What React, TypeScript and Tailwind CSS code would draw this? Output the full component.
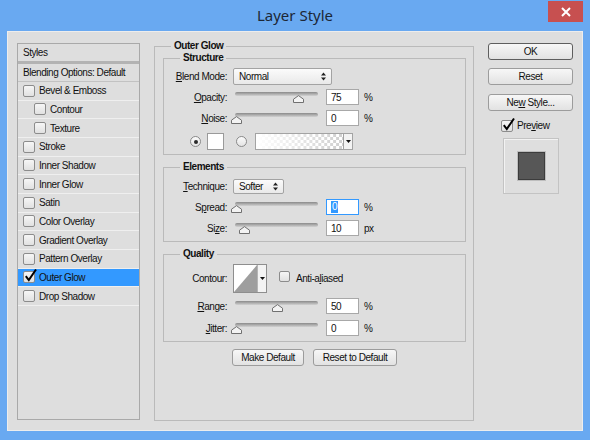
import React from "react";

const UI = "font-['Liberation_Sans',Arial,sans-serif] text-[10px] tracking-[-0.45px] text-[#111]";

const STYLES: { label: string; indent?: boolean; checked?: boolean; selected?: boolean }[] = [
  { label: "Bevel & Emboss" },
  { label: "Contour", indent: true },
  { label: "Texture", indent: true },
  { label: "Stroke" },
  { label: "Inner Shadow" },
  { label: "Inner Glow" },
  { label: "Satin" },
  { label: "Color Overlay" },
  { label: "Gradient Overlay" },
  { label: "Pattern Overlay" },
  { label: "Outer Glow", checked: true, selected: true },
  { label: "Drop Shadow" },
];

function Check({ checked = false, size = "w-[12px] h-[12px]" }: { checked?: boolean; size?: string }) {
  return (
    <span
      className={`relative inline-block shrink-0 rounded-[2px] border border-[#8c8c8c] bg-linear-to-b from-[#f6f6f6] to-[#e1e1e1] ${size}`}
    >
      {checked && (
        <svg className="absolute -top-[4px] left-[0px]" width="14" height="15" viewBox="0 0 14 15">
          <path d="M1.8 8.2 L4.8 12 L12 1.5" fill="none" stroke="#000" strokeWidth="2" />
        </svg>
      )}
    </span>
  );
}

function Radio({ on = false }: { on?: boolean }) {
  return (
    <span className="flex h-[11px] w-[11px] shrink-0 items-center justify-center rounded-full border border-[#8a8a8a] bg-linear-to-b from-[#fbfbfb] to-[#e4e4e4]">
      {on && <span className="h-[4px] w-[4px] rounded-full bg-[#2a2a2a]" />}
    </span>
  );
}

function UpDown() {
  return (
    <svg width="5" height="9" viewBox="0 0 5 9">
      <path d="M0 3.6 L2.5 0.4 L5 3.6Z M0 5.4 L2.5 8.6 L5 5.4Z" fill="#222" />
    </svg>
  );
}

function Caret() {
  return (
    <svg width="5" height="3" viewBox="0 0 5 3">
      <path d="M0 0 H5 L2.5 3Z" fill="#111" />
    </svg>
  );
}

function Label({ children }: { children: React.ReactNode }) {
  return <span className="w-[63px] shrink-0 text-right">{children}</span>;
}

function Slider({ pct }: { pct: number }) {
  return (
    <div className="relative ml-[8px] h-[16px] w-[83px] shrink-0">
      <div className="absolute left-0 right-0 top-[3px] h-[4px] rounded-full bg-linear-to-b from-[#8a8a8a] to-[#d2d2d2]" />
      <svg className="absolute top-[6px]" style={{ left: pct * 0.82 - 4 }} width="11" height="8" viewBox="0 0 11 8">
        <path d="M0.5 7.5V4.2L5.5 0.6L10.5 4.2V7.5Z" fill="#f3f3f3" stroke="#707070" />
      </svg>
    </div>
  );
}

function NumBox({ value, focused = false }: { value: string; focused?: boolean }) {
  return (
    <div
      className={`ml-[8px] flex h-[16px] w-[33px] shrink-0 items-center border bg-white pl-[4px] ${
        focused ? "border-[#3399ff]" : "border-[#a8a8a8]"
      }`}
    >
      {focused ? <span className="bg-[#3399ff] px-[1px] leading-[12px] text-white">{value}</span> : <span>{value}</span>}
    </div>
  );
}

function SliderRow({
  label,
  pct,
  value,
  unit,
  focused,
  gap,
}: {
  label: React.ReactNode;
  pct: number;
  value: string;
  unit: string;
  focused?: boolean;
  gap: string;
}) {
  return (
    <div className={`flex h-[16px] items-center ${gap}`}>
      <Label>{label}</Label>
      <Slider pct={pct} />
      <NumBox value={value} focused={focused} />
      <span className="ml-[5px]">{unit}</span>
    </div>
  );
}

function Group({ title, className, children }: { title: string; className: string; children: React.ReactNode }) {
  return (
    <fieldset className={`border border-[#bababa] p-0 ${className}`}>
      <legend className="ml-[16px] px-[3px] font-bold leading-[12px]">{title}</legend>
      {children}
    </fieldset>
  );
}

function Btn({ children, w, strong = false }: { children: React.ReactNode; w: string; strong?: boolean }) {
  return (
    <div
      className={`flex h-[17px] items-center justify-center rounded-[3px] border bg-linear-to-b from-[#f7f7f7] to-[#e2e2e2] ${w} ${
        strong ? "border-[#5e5e5e]" : "border-[#9c9c9c]"
      }`}
    >
      <span>{children}</span>
    </div>
  );
}

export default function App() {
  return (
    <div className={`flex h-[440px] w-[590px] flex-col bg-[#69a9f1] ${UI}`}>
      {/* window chrome */}
      <div className="relative flex h-[31px] shrink-0 items-center justify-center">
        <span className="font-['Noto_Sans',sans-serif] text-[15px] tracking-normal text-[#1c2736]">Layer Style</span>
        <div className="absolute right-[7px] top-[1px] flex h-[21px] w-[35px] items-center justify-center bg-[#c75050]">
          <svg width="10" height="10" viewBox="0 0 10 10">
            <path d="M1 1L9 9M9 1L1 9" stroke="#fff" strokeWidth="2" />
          </svg>
        </div>
      </div>

      <div className="mx-[7px] flex h-[400px] items-start border border-[#ededed] bg-[#dedede] pl-[9px] pt-[8px]">
        {/* styles list */}
        <div className="mt-[3px] flex h-[377px] w-[123px] shrink-0 flex-col border border-[#a9a9a9]">
          <div className="flex h-[20px] items-center border-b-[3px] border-[#b3b3b3] pl-[5px]">Styles</div>
          <div className="flex h-[18px] items-center whitespace-nowrap border-b border-[#c2c2c2] pl-[5px]">
            Blending Options: Default
          </div>
          {STYLES.map((s) => (
            <div
              key={s.label}
              className={`flex h-[18.67px] items-center border-b border-[#efefef] ${s.indent ? "pl-[16px]" : "pl-[5px]"} ${
                s.selected ? "bg-[#3399ff]" : ""
              }`}
            >
              <Check checked={s.checked} />
              <span className="ml-[4px]">{s.label}</span>
            </div>
          ))}
        </div>

        {/* outer glow settings */}
        <fieldset className="ml-[14px] h-[381px] w-[320px] shrink-0 border border-[#bababa] pb-0 pl-[8px] pr-[7px] pt-0">
          <legend className="ml-[8px] px-[3px] font-bold leading-[12px]">Outer Glow</legend>

          <Group title="Structure" className="h-[103px]">
            <div className="mt-[4px] flex h-[17px] items-center">
              <Label>
                <u>B</u>lend Mode:
              </Label>
              <div className="ml-[6px] flex h-[17px] w-[99px] items-center justify-between rounded-[2px] border border-[#a3a3a3] bg-linear-to-b from-[#fbfbfb] to-[#e9e9e9] pl-[5px] pr-[5px]">
                <span>Normal</span>
                <UpDown />
              </div>
            </div>
            <SliderRow label={<><u>O</u>pacity:</>} pct={75} value="75" unit="%" gap="mt-[4px]" />
            <SliderRow label={<><u>N</u>oise:</>} pct={0} value="0" unit="%" gap="mt-[5px]" />
            <div className="mt-[7px] flex h-[17px] items-center pl-[26px]">
              <Radio on />
              <span className="ml-[6px] h-[17px] w-[17px] border border-[#9a9a9a] bg-white" />
              <span className="ml-[12px]">
                <Radio />
              </span>
              <div className="ml-[8px] flex h-[17px] w-[98px] border border-[#a3a3a3] bg-white">
                <svg className="h-full flex-1" viewBox="0 0 88 15" preserveAspectRatio="none">
                  <defs>
                    <pattern id="chk" width="6" height="6" patternUnits="userSpaceOnUse">
                      <rect width="6" height="6" fill="#fff" />
                      <rect width="3" height="3" fill="#cfcfcf" />
                      <rect x="3" y="3" width="3" height="3" fill="#cfcfcf" />
                    </pattern>
                    <linearGradient id="fade" x1="0" x2="1" y1="0" y2="0">
                      <stop offset="0" stopColor="#fff" stopOpacity="1" />
                      <stop offset="1" stopColor="#fff" stopOpacity="0" />
                    </linearGradient>
                  </defs>
                  <rect width="88" height="15" fill="url(#chk)" />
                  <rect width="88" height="15" fill="url(#fade)" />
                </svg>
                <div className="flex w-[9px] items-center justify-center border-l border-[#a3a3a3] bg-[#f3f3f3]">
                  <Caret />
                </div>
              </div>
            </div>
          </Group>

          <Group title="Elements" className="mt-[6px] h-[81px]">
            <div className="mt-[6px] flex h-[15px] items-center">
              <Label>
                <u>T</u>echnique:
              </Label>
              <div className="ml-[6px] flex h-[15px] w-[51px] items-center justify-between rounded-[2px] border border-[#a3a3a3] bg-linear-to-b from-[#fbfbfb] to-[#e9e9e9] pl-[5px] pr-[5px]">
                <span>Softer</span>
                <UpDown />
              </div>
            </div>
            <SliderRow label={<>S<u>p</u>read:</>} pct={0} value="0" unit="%" focused gap="mt-[5px]" />
            <SliderRow label={<>Si<u>z</u>e:</>} pct={10} value="10" unit="px" gap="mt-[5px]" />
          </Group>

          <Group title="Quality" className="mt-[6px] h-[94px]">
            <div className="mt-[4px] flex h-[29px] items-center">
              <Label>Contour:</Label>
              <div className="ml-[6px] flex h-[29px] w-[34px] border border-[#8e8e8e] bg-white">
                <svg className="h-full flex-1" viewBox="0 0 24 27" preserveAspectRatio="none">
                  <path d="M0 27 L24 0 L24 27Z" fill="#9e9e9e" />
                </svg>
                <div className="flex w-[9px] items-center justify-center border-l border-[#b5b5b5] bg-[#f3f3f3]">
                  <Caret />
                </div>
              </div>
              <span className="ml-[12px]">
                <Check size="w-[11px] h-[11px]" />
              </span>
              <span className="ml-[6px]">
                Anti-a<u>l</u>iased
              </span>
            </div>
            <SliderRow label={<><u>R</u>ange:</>} pct={50} value="50" unit="%" gap="mt-[5px]" />
            <SliderRow label={<><u>J</u>itter:</>} pct={0} value="0" unit="%" gap="mt-[6px]" />
          </Group>

          <div className="mt-[7px] flex justify-center gap-[9px]">
            <Btn w="w-[72px]">Make Default</Btn>
            <Btn w="w-[84px]">Reset to Default</Btn>
          </div>
        </fieldset>

        {/* dialog buttons */}
        <div className="ml-[14px] mt-[3px] flex w-[85px] shrink-0 flex-col">
          <Btn w="w-[85px]" strong>
            OK
          </Btn>
          <div className="mt-[8px]">
            <Btn w="w-[85px]">Reset</Btn>
          </div>
          <div className="mt-[9px]">
            <Btn w="w-[85px]">
              Ne<u>w</u> Style...
            </Btn>
          </div>
          <div className="mt-[8px] flex h-[13px] items-center pl-[13px]">
            <Check checked />
            <span className="ml-[4px]">
              Pre<u>v</u>iew
            </span>
          </div>
          <div className="ml-[15px] mt-[6px] flex h-[56px] w-[56px] items-center justify-center border border-[#c3c3c3] shadow-[inset_1px_1px_0_#f2f2f2]">
            <span className="h-[28px] w-[27px] border border-[#3c3c3c] bg-[#575757] shadow-[0_0_0_1px_#bdbdbd]" />
          </div>
        </div>
      </div>
    </div>
  );
}
